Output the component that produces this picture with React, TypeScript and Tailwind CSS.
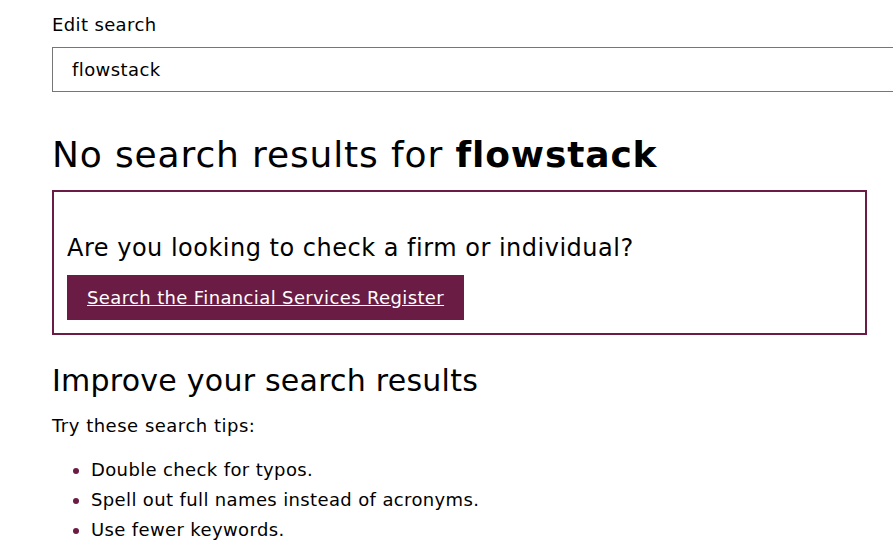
import React from 'react';

const tips = ['Double check for typos.', 'Spell out full names instead of acronyms.', 'Use fewer keywords.'];

const App = () => {
  return (
    <div className="min-h-screen bg-white pl-[52px] pt-[11px] text-black font-['DejaVu_Sans',sans-serif] tracking-[0.023em] overflow-hidden">
      <label htmlFor="q" className="block text-[18px] leading-[28px]">Edit search</label>
      <input
        id="q"
        defaultValue="flowstack"
        className="mt-[8px] block w-[900px] h-[45px] border border-[#767676] px-[19px] text-[18px] tracking-[0.023em] outline-none"
      />

      <h1 className="mt-[38px] text-[36px] leading-[50px] tracking-[0.024em]">
        No search results for <strong className="font-bold">flowstack</strong>
      </h1>

      <section className="mt-[10px] w-[815px] border-2 border-[#6b1c45] px-[13px] pt-[39px] pb-[13px]">
        <p className="text-[24px] leading-[34px] tracking-[0.021em]">Are you looking to check a firm or individual?</p>
        <a href="#" className="mt-[10px] inline-block bg-[#6b1c45] px-[20px] py-[10px] text-[18px] leading-[25px] text-white underline">
          Search the Financial Services Register
        </a>
      </section>

      <h2 className="mt-[26px] text-[30px] leading-[40px] tracking-[0.008em]">Improve your search results</h2>
      <p className="mt-[11px] text-[18px] leading-[28px] tracking-[0.028em]">Try these search tips:</p>
      <ul className="mt-[15px] list-disc pl-[39px] marker:text-[#6b1c45]">
        {tips.map(t => (
          <li key={t} className="text-[18px] leading-[30px]">{t}</li>
        ))}
      </ul>
    </div>
  );
};

export default App;
